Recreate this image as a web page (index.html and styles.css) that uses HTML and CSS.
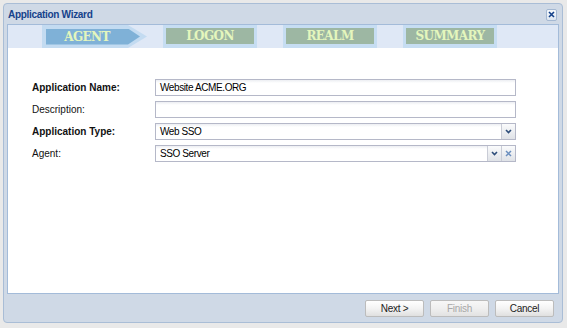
FILE: index.html
```html
<!DOCTYPE html>
<html lang="en">
<head>
  <meta charset="UTF-8" />
  <title>Application Wizard</title>
  <link rel="stylesheet" href="styles.css">
</head>
<body>
  <div class="window">
    <div class="titlebar">
      <span class="title">Application Wizard</span>
      <span class="close">
        <svg width="7" height="7" viewBox="0 0 7 7"><path d="M1 1L6 6M6 1L1 6" stroke="#15428b" stroke-width="1.6" /></svg>
      </span>
    </div>

    <div class="panel">
      <div class="steps">
        <div class="step-active"><div class="step-active-inner"><span>AGENT</span></div></div>
        <div class="step"><div class="step-inner">LOGON</div></div>
        <div class="step"><div class="step-inner">REALM</div></div>
        <div class="step"><div class="step-inner">SUMMARY</div></div>
      </div>

      <div class="form">
        <label class="label bold">Application Name:</label>
        <div class="field"><span class="value">Website ACME.ORG</span></div>

        <label class="label">Description:</label>
        <div class="field"><span class="value"></span></div>

        <label class="label bold">Application Type:</label>
        <div class="field">
          <span class="value">Web SSO</span>
          <span class="trigger">
            <svg width="7" height="5" viewBox="0 0 7 5"><path d="M1 1L3.5 3.5L6 1" fill="none" stroke="#2d4d7a" stroke-width="1.6" /></svg>
          </span>
        </div>

        <label class="label">Agent:</label>
        <div class="field">
          <span class="value">SSO Server</span>
          <span class="trigger">
            <svg width="7" height="5" viewBox="0 0 7 5"><path d="M1 1L3.5 3.5L6 1" fill="none" stroke="#2d4d7a" stroke-width="1.6" /></svg>
          </span>
          <span class="trigger">
            <svg width="7" height="7" viewBox="0 0 7 7"><path d="M1 1L6 6M6 1L1 6" stroke="#6b8fbf" stroke-width="1.5" /></svg>
          </span>
        </div>
      </div>
    </div>

    <div class="footer">
      <button class="btn">Next &gt;</button>
      <button class="btn" disabled>Finish</button>
      <button class="btn">Cancel</button>
    </div>
  </div>
</body>
</html>
```

FILE: styles.css
```css
* {
  box-sizing: border-box;
  margin: 0;
  padding: 0;
}

html, body {
  height: 100%;
}

body {
  background: #e9e9e9;
  font-family: "Liberation Sans", Arial, sans-serif;
  font-size: 10px;
  color: #000;
  padding: 3px 0 0 3px;
}

.window {
  width: 560px;
  height: 320px;
  border: 1px solid #a9bdd6;
  border-radius: 4px;
  background: #cfd9e6;
  padding: 0 3px;
  display: flex;
  flex-direction: column;
}

.titlebar {
  height: 20px;
  display: flex;
  align-items: center;
  justify-content: space-between;
  padding: 1px 1px 0 1px;
}

.title {
  font-weight: bold;
  letter-spacing: -0.3px;
  color: #15428b;
}

.close {
  width: 11px;
  height: 12px;
  margin-right: 1px;
  border: 1px solid #a4b8d2;
  border-radius: 2px;
  background: linear-gradient(#f6f9fc, #dde6f1);
  display: flex;
  align-items: center;
  justify-content: center;
}

.panel {
  flex: 1;
  border: 1px solid #a3bbd9;
  background: #fff;
  display: flex;
  flex-direction: column;
}

/* wizard steps */
.steps {
  height: 23px;
  background: #dfe8f6;
  display: flex;
  align-items: center;
  padding-left: 34px;
  font-family: "DejaVu Serif", "Liberation Serif", serif;
  font-size: 12px;
  font-weight: bold;
  letter-spacing: -0.6px;
  color: #e4f6bd;
}

.step-active {
  width: 105px;
  height: 23px;
  background: #c3dbf1;
  clip-path: polygon(0 0, 86px 0, 105px 50%, 86px 100%, 0 100%);
  display: flex;
  align-items: center;
  padding-left: 4px;
  margin-right: 16px;
}

.step-active-inner {
  width: 94px;
  height: 16px;
  background: #7fb1d7;
  clip-path: polygon(0 0, 82px 0, 94px 50%, 82px 100%, 0 100%);
  display: flex;
  align-items: center;
}

.step-active-inner span {
  width: 82px;
  text-align: center;
}

.step {
  width: 94px;
  height: 23px;
  padding: 3px;
  background: #c6ddf2;
  margin-right: 26px;
}

.step-inner {
  height: 16px;
  background: #9db7a3;
  display: flex;
  align-items: center;
  justify-content: center;
}

/* form */
.form {
  display: grid;
  grid-template-columns: 123px 361px;
  grid-auto-rows: 17px;
  row-gap: 5px;
  padding: 31px 0 0 24px;
}

.label {
  display: flex;
  align-items: center;
  color: #111;
}

.bold {
  font-weight: bold;
}

.field {
  display: flex;
  border: 1px solid #b5b8c8;
  background: linear-gradient(#eceef2, #fff 3px);
}

.value {
  flex: 1;
  padding-left: 4px;
  display: flex;
  align-items: center;
  letter-spacing: -0.4px;
}

.trigger {
  width: 14px;
  background: linear-gradient(#fafbfc, #dfe2e7);
  border-left: 1px solid #c9ccd6;
  display: flex;
  align-items: center;
  justify-content: center;
}

/* footer buttons */
.footer {
  height: 28px;
  display: flex;
  align-items: center;
  justify-content: flex-end;
  gap: 6px;
  padding-right: 5px;
}

.btn {
  width: 59px;
  height: 17px;
  border: 1px solid #bcbcbc;
  border-radius: 2px;
  background: linear-gradient(#ffffff, #f3f3f3 50%, #e0e0e0);
  font-family: inherit;
  font-size: 10px;
  letter-spacing: -0.3px;
  color: #222;
}

.btn:disabled {
  color: #a8a8a8;
  background: linear-gradient(#f7f7f7, #efefef 50%, #e2e2e2);
}
```
